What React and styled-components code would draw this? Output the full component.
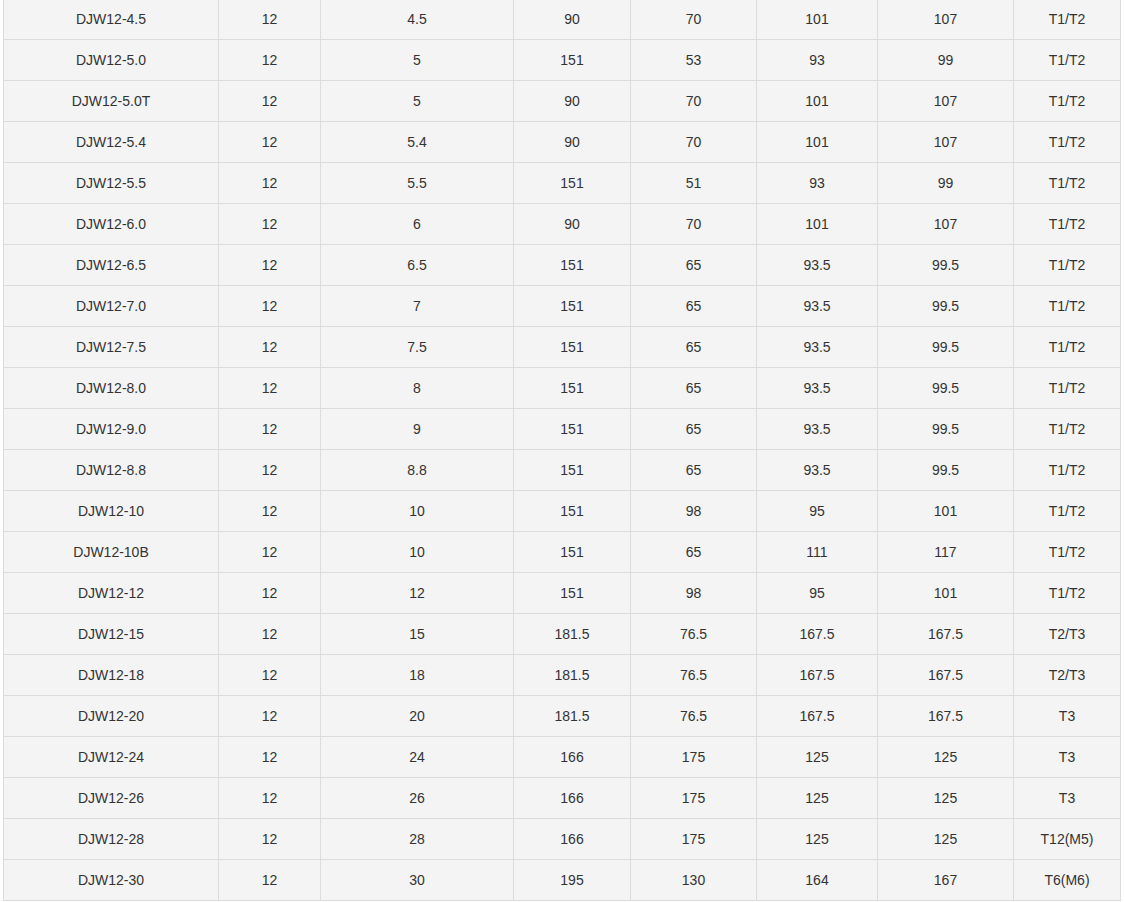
import React from "react";
import styled, { createGlobalStyle } from "styled-components";

const GlobalStyle = createGlobalStyle`
  body {
    margin: 0;
    background: #fff;
    font-family: "Liberation Sans", Arial, sans-serif;
  }
`;

const Wrapper = styled.div`
  padding-left: 3px;
  margin-top: -2px;
  overflow: hidden;
  height: 904px;
`;

const Table = styled.table`
  width: 1117px;
  table-layout: fixed;
  border-collapse: collapse;
  background: #f4f4f4;
  color: #333;
  font-size: 14px;
`;

const Cell = styled.td`
  height: 40px;
  padding: 0;
  border: 1px solid #dcdcdc;
  text-align: center;
  vertical-align: middle;
`;

const widths = [215, 102, 193, 117, 126, 121, 136, 107];

const rows = [
  ["DJW12-4.5", "12", "4.5", "90", "70", "101", "107", "T1/T2"],
  ["DJW12-5.0", "12", "5", "151", "53", "93", "99", "T1/T2"],
  ["DJW12-5.0T", "12", "5", "90", "70", "101", "107", "T1/T2"],
  ["DJW12-5.4", "12", "5.4", "90", "70", "101", "107", "T1/T2"],
  ["DJW12-5.5", "12", "5.5", "151", "51", "93", "99", "T1/T2"],
  ["DJW12-6.0", "12", "6", "90", "70", "101", "107", "T1/T2"],
  ["DJW12-6.5", "12", "6.5", "151", "65", "93.5", "99.5", "T1/T2"],
  ["DJW12-7.0", "12", "7", "151", "65", "93.5", "99.5", "T1/T2"],
  ["DJW12-7.5", "12", "7.5", "151", "65", "93.5", "99.5", "T1/T2"],
  ["DJW12-8.0", "12", "8", "151", "65", "93.5", "99.5", "T1/T2"],
  ["DJW12-9.0", "12", "9", "151", "65", "93.5", "99.5", "T1/T2"],
  ["DJW12-8.8", "12", "8.8", "151", "65", "93.5", "99.5", "T1/T2"],
  ["DJW12-10", "12", "10", "151", "98", "95", "101", "T1/T2"],
  ["DJW12-10B", "12", "10", "151", "65", "111", "117", "T1/T2"],
  ["DJW12-12", "12", "12", "151", "98", "95", "101", "T1/T2"],
  ["DJW12-15", "12", "15", "181.5", "76.5", "167.5", "167.5", "T2/T3"],
  ["DJW12-18", "12", "18", "181.5", "76.5", "167.5", "167.5", "T2/T3"],
  ["DJW12-20", "12", "20", "181.5", "76.5", "167.5", "167.5", "T3"],
  ["DJW12-24", "12", "24", "166", "175", "125", "125", "T3"],
  ["DJW12-26", "12", "26", "166", "175", "125", "125", "T3"],
  ["DJW12-28", "12", "28", "166", "175", "125", "125", "T12(M5)"],
  ["DJW12-30", "12", "30", "195", "130", "164", "167", "T6(M6)"],
];

export default function App() {
  return (
    <>
      <GlobalStyle />
      <Wrapper>
        <Table>
          <colgroup>
            {widths.map((w, i) => (
              <col key={i} style={{ width: w }} />
            ))}
          </colgroup>
          <tbody>
            {rows.map((row) => (
              <tr key={row[0]}>
                {row.map((v, i) => (
                  <Cell key={i}>{v}</Cell>
                ))}
              </tr>
            ))}
          </tbody>
        </Table>
      </Wrapper>
    </>
  );
}
